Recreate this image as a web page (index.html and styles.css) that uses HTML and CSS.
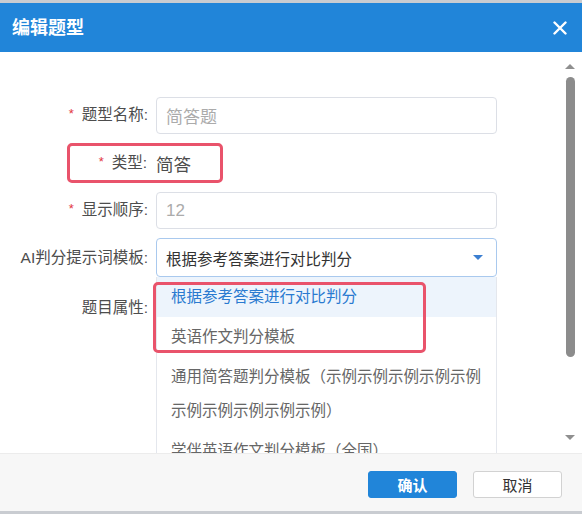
FILE: index.html
```html
<!DOCTYPE html>
<html>
<head>
    <link rel="stylesheet" href="styles.css">
</head>
<body>

    <div class="dialog">
        <div class="dialog-header">
            <span class="dialog-title">编辑题型</span>
            <span class="close-btn">
                <svg width="14" height="14" viewBox="0 0 14 14">
                    <path d="M1.5 1.5 L12.5 12.5 M12.5 1.5 L1.5 12.5" stroke="#fff" stroke-width="2.4" stroke-linecap="round" fill="none"/>
                </svg>
            </span>
        </div>

        <div class="dialog-body">
            <div class="form">
                <div class="form-row">
                    <label class="form-label"><span class="req">*</span>题型名称:</label>
                    <input class="form-input" type="text" value="简答题">
                </div>

                <div class="type-row">
                    <span class="form-label type-label"><span class="req">*</span>类型:</span>
                    <span class="type-value">简答</span>
                </div>

                <div class="form-row">
                    <label class="form-label"><span class="req">*</span>显示顺序:</label>
                    <input class="form-input" type="text" value="12">
                </div>

                <div class="form-row">
                    <label class="form-label">AI判分提示词模板:</label>
                    <div class="select-wrap">
                        <div class="select">
                            <span>根据参考答案进行对比判分</span>
                            <span class="caret"></span>
                        </div>
                        <ul class="dropdown">
                            <li class="option active">根据参考答案进行对比判分</li>
                            <li class="option">英语作文判分模板</li>
                            <li class="option">通用简答题判分模板（示例示例示例示例示例示例示例示例示例示例）</li>
                            <li class="option">学伴英语作文判分模板（全国）</li>
                        </ul>
                        <div class="mark"></div>
                    </div>
                </div>

                <div class="form-row attr-row">
                    <label class="form-label">题目属性:</label>
                </div>
            </div>

            <div class="scrollbar">
                <span class="arrow-up"></span>
                <span class="thumb"></span>
                <span class="arrow-down"></span>
            </div>
        </div>

        <div class="dialog-footer">
            <button class="btn btn-primary">确认</button>
            <button class="btn">取消</button>
        </div>
    </div>

</body>
</html>
```

FILE: styles.css
```css
body {
    margin: 0;
    background-color: #c9ccd1;
    font-family: "Liberation Sans", "Noto Sans CJK SC", sans-serif;
}
.dialog {
    margin-top: 3px;
    height: 508px;
    background-color: #fff;
    display: flex;
    flex-direction: column;
}
.dialog-header {
    height: 49px;
    flex-shrink: 0;
    background-color: #2185d9;
    display: flex;
    align-items: center;
    justify-content: space-between;
    padding: 0 15px 0 12px;
}
.dialog-title {
    color: #fff;
    font-size: 18px;
    font-weight: bold;
    line-height: 24px;
}
.close-btn {
    display: flex;
    width: 14px;
    height: 14px;
}
.dialog-body {
    flex: 1;
    display: flex;
    overflow: hidden;
}
.form {
    flex: 1;
    padding-top: 45px;
}
.form-row {
    display: flex;
    align-items: center;
    margin-bottom: 9px;
}
.form-label {
    width: 148px;
    flex-shrink: 0;
    text-align: right;
    font-size: 15.5px;
    line-height: 20px;
    color: #4d4d4d;
}
.req {
    color: #e2363f;
    font-size: 13px;
    margin-right: 8px;
    position: relative;
    top: -2px;
}
.form-input {
    margin-left: 8px;
    width: 341px;
    height: 37px;
    box-sizing: border-box;
    border: 1px solid #dcdfe6;
    border-radius: 4px;
    padding: 0 9px;
    font-family: inherit;
    font-size: 17px;
    color: #ababab;
    outline: none;
}
.type-row {
    margin: 0 0 9px 67px;
    width: 156px;
    height: 40px;
    box-sizing: border-box;
    border: 3px solid #e9536b;
    border-radius: 5px;
    display: flex;
    align-items: center;
}
.type-label {
    width: 77px;
}
.type-value {
    margin-left: 9px;
    font-size: 17.5px;
    color: #4d4d4d;
}
.select-wrap {
    position: relative;
    margin-left: 8px;
    width: 341px;
}
.select {
    height: 39px;
    box-sizing: border-box;
    border: 1px solid #a9c9ee;
    border-radius: 4px;
    padding: 0 13px 0 9px;
    display: flex;
    align-items: center;
    justify-content: space-between;
    font-size: 15.5px;
    color: #333;
}
.caret {
    width: 0;
    height: 0;
    border-left: 5px solid transparent;
    border-right: 5px solid transparent;
    border-top: 5px solid #3b7fd1;
}
.dropdown {
    position: absolute;
    top: 100%;
    left: 0;
    right: 0;
    margin: 0;
    padding: 0;
    list-style: none;
    background-color: #fff;
    border-left: 1px solid #e4e7ed;
    border-right: 1px solid #e4e7ed;
}
.option {
    padding: 3px 15px 3px 14px;
    line-height: 34px;
    font-size: 15.5px;
    color: #666;
}
.option.active {
    background-color: #edf4fc;
    color: #2a7ad0;
}
.mark {
    position: absolute;
    left: -3px;
    top: 44px;
    width: 273px;
    height: 71px;
    box-sizing: border-box;
    border: 3px solid #e9536b;
    border-radius: 5px;
}
.attr-row {
    height: 44px;
}
.scrollbar {
    width: 18px;
    margin-right: 3px;
    display: flex;
    flex-direction: column;
    align-items: center;
}
.arrow-up {
    margin-top: 12px;
    width: 0;
    height: 0;
    border-left: 5px solid transparent;
    border-right: 5px solid transparent;
    border-bottom: 5px solid #8f8f8f;
}
.thumb {
    margin-top: 8px;
    width: 9px;
    height: 280px;
    border-radius: 5px;
    background-color: #8c8c8c;
}
.arrow-down {
    margin-top: auto;
    margin-bottom: 13px;
    width: 0;
    height: 0;
    border-left: 5px solid transparent;
    border-right: 5px solid transparent;
    border-top: 5px solid #8f8f8f;
}
.dialog-footer {
    height: 58px;
    flex-shrink: 0;
    box-sizing: border-box;
    background-color: #f7f7f7;
    border-top: 1px solid #ececec;
    display: flex;
    justify-content: flex-end;
    align-items: flex-start;
    gap: 16px;
    padding: 17px 20px 0 0;
}
.btn {
    width: 89px;
    height: 27px;
    border: 1px solid #d2d2d2;
    border-radius: 3px;
    background-color: #fff;
    color: #333;
    font-family: inherit;
    font-size: 15px;
    cursor: pointer;
}
.btn-primary {
    background-color: #2185d9;
    border-color: #2185d9;
    color: #fff;
    font-weight: bold;
}
```
